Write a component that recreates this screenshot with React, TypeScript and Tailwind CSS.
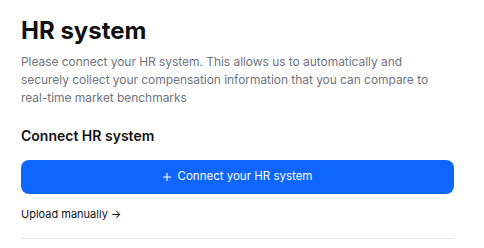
export default function App() {
  return (
    <div className="min-h-screen bg-white pl-[21px] pt-[15px] font-['Inter',sans-serif]">
      <div className="flex w-[433px] flex-col">
        <h1 className="text-[24px] leading-[32px] font-bold text-[#111111]">
          HR system
        </h1>
        <p className="mt-[6px] max-w-[420px] text-[12px] leading-[18px] tracking-[-0.05px] text-[#70747c]">
          Please connect your HR system. This allows us to automatically and
          securely collect your compensation information that you can compare to
          real-time market benchmarks
        </p>

        <h2 className="mt-[19px] text-[14px] leading-[20px] font-semibold text-[#111111]">
          Connect HR system
        </h2>

        <button className="mt-[14px] flex h-[34px] w-full items-center justify-center gap-[7px] rounded-[8px] bg-[#0f66ff] text-[11.5px] text-white">
          <svg width="8" height="8" viewBox="0 0 8 8" fill="none">
            <path d="M4 0v8M0 4h8" stroke="white" strokeWidth="1.1" />
          </svg>
          Connect your HR system
        </button>

        <div className="mt-[12px] flex items-center gap-[3px] text-[11px] leading-[16px] text-[#111111]">
          <span>Upload manually</span>
          <span>→</span>
        </div>

        <div className="mt-[16px] border-t border-[#e5e7eb]" />
      </div>
    </div>
  );
}
